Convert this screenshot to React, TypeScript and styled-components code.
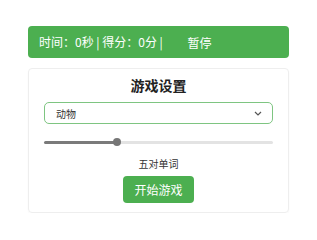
import React, { useState } from 'react';
import styled, { createGlobalStyle } from 'styled-components';

const GlobalStyle = createGlobalStyle`
  html, body {
    margin: 0;
    padding: 0;
    background: #fff;
  }
  body {
    font-family: 'Noto Sans CJK SC', 'Noto Sans', sans-serif;
  }
`;

const Page = styled.div`
  width: 261px;
  margin: 0 auto;
  padding-top: 26px;
  display: flex;
  flex-direction: column;
  gap: 10px;
`;

const StatusBar = styled.div`
  height: 32px;
  box-sizing: border-box;
  background: #4caf50;
  border-radius: 4px;
  padding: 0 11px;
  display: flex;
  align-items: center;
  color: #fff;
  font-size: 12px;
  line-height: 16px;
  white-space: pre;
`;

const PauseButton = styled.button`
  border: none;
  background: transparent;
  color: #fff;
  font-family: inherit;
  font-size: 12px;
  padding: 0;
  margin-left: 22px;
  cursor: pointer;
`;

const Card = styled.div`
  border: 1px solid #eeeeee;
  border-radius: 4px;
  padding: 7px 15px 9px;
  display: flex;
  flex-direction: column;
  align-items: center;
  box-shadow: 0 1px 2px rgba(0, 0, 0, 0.03);
`;

const Title = styled.h2`
  margin: 0;
  font-size: 14px;
  line-height: 18px;
  font-weight: 700;
  color: #222;
`;

const SelectBox = styled.div`
  position: relative;
  align-self: stretch;
  margin-top: 8px;
`;

const Select = styled.select`
  display: block;
  appearance: none;
  width: 100%;
  height: 22px;
  box-sizing: border-box;
  border: 1px solid #7ec581;
  border-radius: 5px;
  background: #fff;
  padding: 0 11px;
  font-family: inherit;
  font-size: 10px;
  color: #333;
  outline: none;
`;

const Chevron = styled.svg`
  position: absolute;
  right: 11px;
  top: 9px;
  pointer-events: none;
`;

const Range = styled.input<{ $fill: number }>`
  display: block;
  appearance: none;
  -webkit-appearance: none;
  align-self: stretch;
  width: 100%;
  height: 12px;
  margin: 12px 0 0;
  background: transparent;

  &::-webkit-slider-runnable-track {
    height: 3px;
    border-radius: 2px;
    background: linear-gradient(
      to right,
      #7a7a7a 0%,
      #7a7a7a ${(p) => p.$fill}%,
      #e3e3e3 ${(p) => p.$fill}%,
      #e3e3e3 100%
    );
  }

  &::-webkit-slider-thumb {
    -webkit-appearance: none;
    width: 8px;
    height: 8px;
    margin-top: -2.5px;
    border-radius: 50%;
    background: #767676;
    border: none;
  }
`;

const PairLabel = styled.div`
  margin-top: 9px;
  font-size: 10px;
  line-height: 14px;
  color: #333;
`;

const StartButton = styled.button`
  margin-top: 5px;
  height: 27px;
  padding: 0 11px;
  border: none;
  border-radius: 4px;
  background: #4caf50;
  color: #fff;
  font-family: inherit;
  font-size: 12px;
  cursor: pointer;
`;

const numerals = ['零', '一', '二', '三', '四', '五', '六', '七', '八', '九', '十', '十一', '十二', '十三', '十四', '十五', '十六'];

export default function App() {
  const [pairs, setPairs] = useState(5);
  const min = 0;
  const max = 16;
  const fill = ((pairs - min) / (max - min)) * 100;

  return (
    <>
      <GlobalStyle />
      <Page>
        <StatusBar>
          {'时间：0秒 | 得分：0分 | '}
          <PauseButton>暂停</PauseButton>
        </StatusBar>
        <Card>
          <Title>游戏设置</Title>
          <SelectBox>
            <Select defaultValue="animals">
              <option value="animals">动物</option>
              <option value="fruits">水果</option>
              <option value="colors">颜色</option>
            </Select>
            <Chevron width="8" height="5" viewBox="0 0 8 5">
              <path d="M1 1l3 3l3-3" fill="none" stroke="#555" strokeWidth="1.2" />
            </Chevron>
          </SelectBox>
          <Range
            type="range"
            min={min}
            max={max}
            value={pairs}
            $fill={fill}
            onChange={(e) => setPairs(Number(e.target.value))}
          />
          <PairLabel>{numerals[pairs]}对单词</PairLabel>
          <StartButton>开始游戏</StartButton>
        </Card>
      </Page>
    </>
  );
}
